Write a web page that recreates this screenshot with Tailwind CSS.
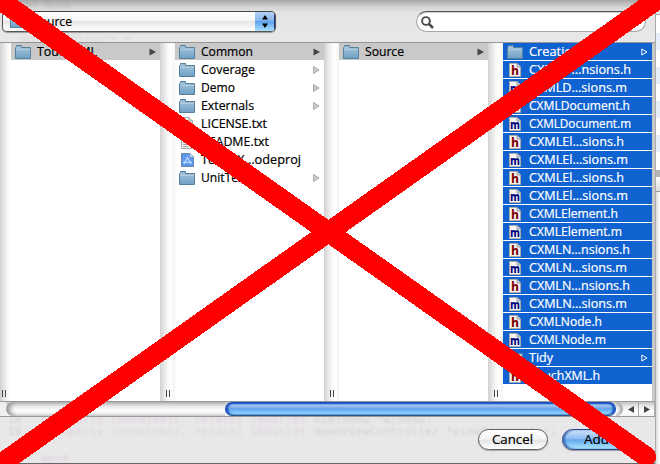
<!DOCTYPE html>
<html lang="en">
<head>
<meta charset="utf-8">
<title>Add files</title>
<script src="https://cdn.jsdelivr.net/npm/@tailwindcss/browser@4"></script>
</head>
<body class="w-[660px] h-[464px] overflow-hidden bg-white font-['Open_Sans','Noto_Sans',sans-serif] text-[12.5px] text-black">
<svg class="absolute w-0 h-0">
  <defs>
    <linearGradient id="fg" x1="0" y1="0" x2="0" y2="1"><stop offset="0" stop-color="#a9c8de"/><stop offset="1" stop-color="#6fa0c3"/></linearGradient>
    <symbol id="folder" viewBox="0 0 16 14"><path d="M.5 13.5V2.5L1.5 1.5V.5H6.5V2.5H15.5V13.5Z" fill="url(#fg)" stroke="#55819f"/><path d="M1 4.5H15" stroke="#b0cbde"/><path d="M2 1.5H6" stroke="#93b8d2"/></symbol>
    <symbol id="page" viewBox="0 0 12 14"><path d="M.5 .5H8L11.5 4V13.5H.5Z" fill="#f4f4f2" stroke="#aaa"/><path d="M8 .5V4H11.5" fill="#ddd" stroke="#999"/></symbol>
    <symbol id="lines" viewBox="0 0 12 14"><path d="M2 5.5H9M2 7.5H10M2 9.5H10M2 11.5H8" stroke="#aaa"/></symbol>
    <symbol id="proj" viewBox="0 0 13 14"><path d="M.5 .5H9L12.5 4V13.5H.5Z" fill="#5c99ea" stroke="#6684ad"/><path d="M9 .5V4H12.5Z" fill="#edf4ff" stroke="#8aa5cb" stroke-width=".7"/><path d="M3 11L6.5 4.5L10 11M2 9.2H11" fill="none" stroke="#c6e0ff" stroke-width="1.1"/></symbol>
  </defs>
</svg>
<div class="relative flex w-[660px] h-[464px] overflow-hidden">
  <main class="flex flex-col w-[655px] h-[464px] bg-[#e8e8e8]">
    <header class="relative flex h-[43px] shrink-0 pt-[11px] border-b border-[#969696] bg-[linear-gradient(#a6a6a6,#d4d4d4_7px,#e5e5e5_13px,#e8e8e8)]">
      <span class="absolute left-[25px] top-[-1px] text-[11px] leading-[14px] text-black/8 blur-[1px] font-['DejaVu_Sans_Mono',monospace]">ay Name</span>
      <span class="absolute left-[18px] top-[32px] text-[11px] leading-[14px] text-black/6 blur-[1px] font-['DejaVu_Sans_Mono',monospace]">demoAppDelegate.m</span>
      <div class="relative ml-[2px] flex w-[274px] h-[21px] rounded-[5px] border border-[#555] border-t-[#444] overflow-hidden bg-[linear-gradient(#fff,#f6f6f6_45%,#e6e6e6_50%,#fff)] shadow-[0_1px_1px_#999]">
        <svg class="ml-[7px] mt-[2px] w-4 h-[14px]"><use href="#folder"/></svg>
        <svg class="ml-[7px] w-[60px] h-[19px] overflow-visible stroke-black" stroke-width=".2"><text x="0" y="13.5" textLength="39" lengthAdjust="spacingAndGlyphs">Source</text></svg>
        <span class="ml-auto flex w-[20px] h-full items-center justify-center bg-[linear-gradient(#b4d1f5,#85b6ef_45%,#5da2ec_50%,#a8e0ff)] border-r border-[#1b3286]">
          <svg class="w-[6px] h-[13px]" viewBox="0 0 6 13"><path d="M0 4.5L3 0L6 4.5ZM0 8.5H6L3 13Z"/></svg>
        </span>
      </div>
      <div class="ml-[140px] flex w-[230px] h-[21px] rounded-full border border-[#a5a5a5] border-t-[#555] bg-white shadow-[inset_0_1px_1px_#ccc]">
        <svg class="ml-[4px] mt-[4px] w-[14px] h-[14px]" viewBox="0 0 14 14" fill="none" stroke="#4c4c4c"><circle cx="5" cy="5" r="3.9" stroke-width="1.9"/><path d="M8 8L12 12" stroke-width="2.5"/></svg>
      </div>
    </header>

    <section id="browser" class="relative flex h-[358px] shrink-0 bg-white"></section>

    <div class="relative z-1 flex h-[16px] shrink-0 border-t border-b border-[#999] bg-[linear-gradient(#c2c2c2,#e7e7e7_4px,#fff_9px,#f2f2f2)]">
      <div class="w-[6px] bg-[#efefef]"></div>
      <div class="w-[219px] rounded-l-full shadow-[inset_4px_0_4px_#999]"></div>
      <div class="w-[391px] h-[14px] rounded-full border border-[#174bbd] border-b-[#285584] bg-[linear-gradient(#2463cf,#a5c9f3_2px,#79acec_5px,#5ba3ee_6px,#83c5fc_9px,#a3e6ff)] shadow-[inset_2px_0_2px_#1549bb,inset_-2px_0_2px_#1549bb]"></div>
      <div class="w-[7px] rounded-r-full shadow-[inset_-3px_0_3px_#aaa]"></div>
      <div class="flex w-[16px] items-center justify-center border-r border-[#aaa]"><svg class="w-[6px] h-[7px]" viewBox="0 0 6 7"><path d="M6 0V7L0 3.5Z" fill="#444"/></svg></div>
      <div class="flex w-[16px] items-center justify-center border-r border-[#aaa]"><svg class="w-[6px] h-[7px]" viewBox="0 0 6 7"><path d="M0 0V7L6 3.5Z" fill="#444"/></svg></div>
    </div>

    <footer class="relative flex h-[47px] shrink-0 pt-[12px] border-b border-[#666]">
      <svg class="absolute left-0 top-0 w-[655px] h-[46px] blur-[0.8px] font-['DejaVu_Sans_Mono',monospace] text-[11px] fill-black/10">
        <text x="8" y="6">18</text><text x="8" y="18">19</text>
        <g class="fill-[#a000a0]/10">
          <text x="41" y="6" textLength="265">@property (nonatomic, retain) IBOutlet</text>
          <text x="41" y="18" textLength="265">@property (nonatomic, retain) IBOutlet</text>
          <text x="41" y="45" textLength="27">@end</text>
        </g>
        <text x="314" y="6" textLength="118">UIWindow *window;</text>
        <text x="314" y="18" textLength="243">demoViewController *viewController;</text>
      </svg>
      <button class="relative ml-[478px] w-[70px] h-[21px] rounded-full border border-[#606060] bg-[linear-gradient(#fff,#f4f4f4_48%,#e5e5e5_52%,#fff)] shadow-[0_1px_1px_#aaa]"><svg class="block w-full h-full stroke-black" stroke-width=".2"><text x="13" y="13.5" textLength="41" lengthAdjust="spacingAndGlyphs">Cancel</text></svg></button>
      <button class="relative ml-[14px] w-[70px] h-[21px] rounded-full border border-[#26458b] bg-[linear-gradient(#d2e4fa,#8fbcf2_45%,#64a8ef_52%,#b0e8ff)] shadow-[0_1px_1px_#999,inset_2px_0_2px_#4671bd]"><svg class="block w-full h-full stroke-black" stroke-width=".2"><text x="21" y="13.5" textLength="25" lengthAdjust="spacingAndGlyphs">Add</text></svg></button>
    </footer>
  </main>
  <aside class="flex flex-col w-[5px] border-l border-[#aaa] bg-white">
    <div class="h-[15px] bg-[#e9e9e9] border-b border-[#aaa]"></div>
    <div class="h-[18px]"></div><div class="h-[17px] bg-[#e7eefa]"></div><div class="h-[17px]"></div><div class="h-[17px] bg-[#e7eefa]"></div><div class="h-[17px]"></div><div class="h-[17px] bg-[#e7eefa]"></div><div class="h-[17px]"></div><div class="h-[17px] bg-[#e7eefa]"></div><div class="h-[18px]"></div>
    <div class="h-[7px] bg-[#b5b5b5]"></div><div class="h-[15px] bg-[linear-gradient(#fff,#ddd)] border-b border-[#999]"></div>
    <div class="grow bg-[linear-gradient(90deg,#ddd,#fff)]"></div>
  </aside>
  <svg class="absolute z-10 inset-0 w-[660px] h-[464px]" viewBox="0 0 660 464" fill="none" stroke="#f00" stroke-width="20" stroke-linecap="round" shape-rendering="crispEdges"><path d="M0 0L646 456.5M0 464.5L660 -2.5"/></svg>
</div>
<script>
// Rows: icon, label, label width, arrow style.
const columns = [
  [['folder','TouchXML',60,'on']],
  [['folder','Common',52,'on'],['folder','Coverage',54,'off'],['folder','Demo',34,'off'],['folder','Externals',53,'off'],['txt','LICENSE.txt',66],['txt','README.txt',68],['proj','TouchX…odeproj',100],['folder','UnitTests',53,'off']],
  [['folder','Source',39,'on']],
  [['folder','Creation',51,'sel'],['h','CXMLD…nsions.h',102],['m','CXMLD…sions.m',98],['h','CXMLDocument.h',101],['m','CXMLDocument.m',102],['h','CXMLEl…sions.h',95],['m','CXMLEl…sions.m',99],['h','CXMLEl…sions.h',95],['m','CXMLEl…sions.m',99],['h','CXMLElement.h',89],['m','CXMLElement.m',93],['h','CXMLN…nsions.h',101],['m','CXMLN…sions.m',98],['h','CXMLN…nsions.h',101],['m','CXMLN…sions.m',98],['h','CXMLNode.h',73],['m','CXMLNode.m',77],['folder','Tidy',24,'sel'],['h','TouchXML.h',71]]
];
const page = inner => `<svg class="ml-[2px] w-[12px] h-[14px] shrink-0 overflow-visible"><use href="#page"/>${inner}</svg>`;
const icons = {
  folder: '<svg class="w-4 h-[14px] shrink-0"><use href="#folder"/></svg>',
  proj: '<svg class="ml-[2px] w-[13px] h-[14px] shrink-0"><use href="#proj"/></svg>',
  txt: page('<use href="#lines"/>'),
  h: page(`<text x="2" y="12" textLength="8" lengthAdjust="spacingAndGlyphs" class="fill-[#800000] text-[12px] font-bold font-['DejaVu_Sans',sans-serif]">h</text>`),
  m: page(`<text x="1" y="12" textLength="10" lengthAdjust="spacingAndGlyphs" class="fill-[#000080] text-[12px] font-bold font-['DejaVu_Sans',sans-serif]">m</text>`)
};
const arrows = {
  on: '<path d="M.5 .5V7.5L7 4Z" fill="#444"/>',
  off: '<path d="M.5 .5V7.5L6 4Z" fill="#ccc" stroke="#999" stroke-width=".8"/>',
  sel: '<path d="M.8 1V7L6 4Z" fill="none" stroke="#fff"/>'
};
const splitter = w => `<div class="${w} shrink-0 flex items-end bg-[linear-gradient(90deg,#d0d0d0,#e6e6e6_4px,#f8f8f8_8px,#fff_11px,#f2f2f2)]"><i class="mb-[4px] block w-[4px] h-[7px] border-x border-[#444]"></i></div>`;
document.getElementById('browser').innerHTML = columns.map((rows, c) =>
  (c ? splitter('w-[15px] pl-[6px]') : splitter('w-[11px] pl-[2px]')) +
  '<div class="w-[149px] shrink-0">' + rows.map(([icon, label, w, arrow]) => {
    const tone = c === 3 ? 'bg-[#0f62cf] fill-white stroke-white' : arrow === 'on' ? 'bg-[#c9c9c9] stroke-black' : 'stroke-black';
    return `<div class="h-[18px] border-b border-white"><div class="flex items-center h-[17px] pl-[4px] ${tone}"><span class="flex w-[22px] shrink-0 stroke-none">${icons[icon]}</span><svg class="h-[17px] w-[104px] shrink-0 overflow-visible" stroke-width=".2"><text x="0" y="13" textLength="${w}" lengthAdjust="spacingAndGlyphs">${label}</text></svg>${arrow ? `<svg class="ml-auto mr-[4px] w-[7px] h-[8px] shrink-0 stroke-none" viewBox="0 0 7 8">${arrows[arrow]}</svg>` : ''}</div></div>`;
  }).join('') + '</div>').join('') + '<div class="w-[3px] bg-[#c8c8c8]"></div>';
</script>
</body>
</html>
